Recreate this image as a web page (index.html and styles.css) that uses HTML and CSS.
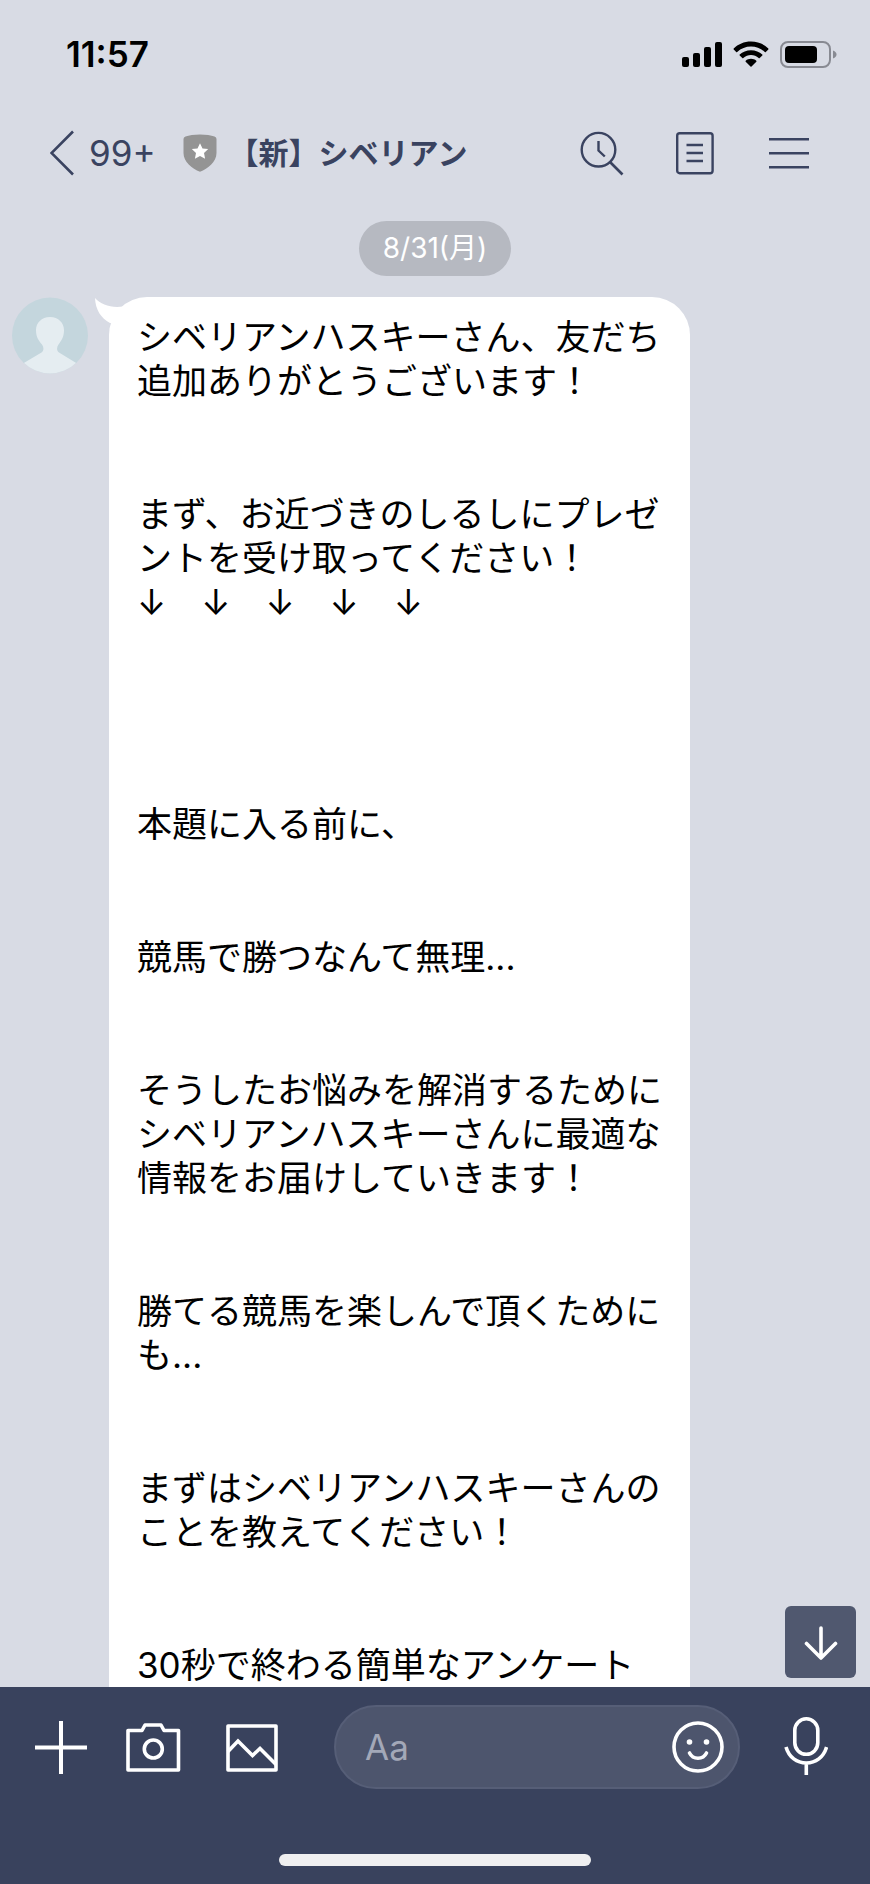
FILE: index.html
```html
<!DOCTYPE html>
<html lang="ja">
<head>
<meta charset="utf-8">
<meta name="viewport" content="width=device-width, initial-scale=1">
<title>【新】シベリアン</title>
<link rel="stylesheet" href="styles.css">
</head>
<body>
<div class="app">
  <div class="status">
    <span class="status-time">11:57</span>
    <div class="status-icons">
      <svg width="40" height="27" viewBox="0 0 40 27"><rect x="0" y="16" width="7" height="10" rx="2"/><rect x="11" y="12" width="7" height="14" rx="2"/><rect x="22" y="6" width="7" height="20" rx="2"/><rect x="33" y="1" width="7" height="25" rx="2"/></svg>
      <svg width="36" height="27" viewBox="0 0 36 27"><path d="M18 0.5C25 .5 31 3.200 35.300 7.500Q35.700 8 35.300 8.500L32.800 11Q32.300 11.400 31.800 11C28 7.500 23.200 5.600 18 5.600S8 7.500 4.200 11Q3.700 11.400 3.200 11L.7 8.500Q.3 8 .7 7.500C5 3.200 11 .5 18 .5Z"/><path d="M18 9.200C22.500 9.200 26.400 10.900 29.300 13.600Q29.800 14.100 29.300 14.600L26.700 17.100Q26.200 17.500 25.700 17.100C23.500 15.200 20.900 14.100 18 14.100S12.500 15.200 10.300 17.100Q9.800 17.500 9.300 17.100L6.700 14.600Q6.200 14.100 6.700 13.600C9.600 10.900 13.500 9.200 18 9.200Z"/><path d="M18 17.800C20 17.800 21.900 18.500 23.300 19.700Q23.800 20.200 23.300 20.700L18.500 25.600Q18 26 17.500 25.600L12.700 20.700Q12.200 20.200 12.700 19.700C14.100 18.500 16 17.800 18 17.800Z"/></svg>
      <svg width="57" height="27" viewBox="0 0 57 27"><rect x="1" y="1" width="49" height="25" rx="7" fill="none" stroke="#888a92" stroke-width="2"/><rect x="5" y="5" width="32" height="17" rx="4"/><path d="M53 9.500Q56.500 11 56.500 13.500T53 17.500Z" fill="#888a92"/></svg>
    </div>
  </div>

  <header class="nav">
    <button class="back" type="button" aria-label="戻る 99+">
      <svg width="24" height="46" viewBox="0 0 24 46"><path d="M23 1.500 1.500 23 23 44.500" fill="none" stroke="currentColor" stroke-width="2.600"/></svg>
      <span>99+</span>
    </button>
    <svg class="shield" width="34" height="38" viewBox="0 0 34 38"><path d="M17 .5C23 .5 28 1.300 31.500 2.400Q33.500 3 33.500 5V19C33.500 28 25 34.500 17 37.800 9 34.500 .5 28 .5 19V5Q.5 3 2.500 2.400C6 1.300 11 .5 17 .5Z" fill="#949494"/><path d="M17 9.200 19.500 14.400 25.200 15.100 21 19 22.100 24.700 17 21.900 11.900 24.700 13 19 8.800 15.100 14.500 14.400Z" fill="#fff"/></svg>
    <h1 class="title">【新】シベリアン</h1>
    <div class="nav-actions">
      <button type="button" aria-label="検索"><svg width="48" height="48" viewBox="0 0 48 48"><g fill="none" stroke="currentColor" stroke-width="2.400"><circle cx="19.500" cy="20.700" r="16.800"/><path d="M31 33 43.500 45.500" stroke-width="2.600"/><path d="M19.500 12V21.500L25.800 27.500"/></g></svg></button>
      <button type="button" aria-label="ノート"><svg width="48" height="48" viewBox="0 0 48 48"><g fill="none" stroke="currentColor" stroke-width="2.400"><rect x="5.200" y="4.200" width="35.400" height="40" rx="2.500"/><path d="M14.500 16H31M14.500 24H31M14.500 32H31"/></g></svg></button>
      <button type="button" aria-label="メニュー"><svg width="48" height="48" viewBox="0 0 48 48"><path d="M4 10.200H44M4 24.200H44M4 38.200H44" fill="none" stroke="currentColor" stroke-width="2.600"/></svg></button>
    </div>
  </header>

  <main class="chat">
    <time class="date">8/31(月)</time>
    <div class="message">
      <svg class="avatar" width="76" height="77" viewBox="0 0 76 76" role="img" aria-label="プロフィール"><defs><clipPath id="disc"><circle cx="38" cy="38" r="38"/></clipPath></defs><circle cx="38" cy="38" r="38" fill="#c4d6dd"/><path clip-path="url(#disc)" d="M38 19.500C46.500 19.500 52 25.500 52 32.500 52 40 49 43.500 46.500 47 44.500 50 44.500 53 47 55L65 66V78H11V66L29.500 55C32 53 32 50 30 47 27 43.500 24 40 24 32.500 24 25.500 29.500 19.500 38 19.500Z" fill="#e5edf1"/></svg>
      <div class="bubble">
        <svg class="tail" width="40" height="30" viewBox="0 0 40 30"><path d="M0 1C6 8 16 11 28 9.500L38 14 24 28 15 26C6 21 .5 13 0 1Z" fill="#fff"/></svg>
        <p>シベリアンハスキーさん、友だち<br>追加ありがとうございます！</p>
        <p>まず、お近づきのしるしにプレゼ<br>ントを受け取ってください！<br>↓　↓　↓　↓　↓</p>
        <p class="after-break">本題に入る前に、</p>
        <p>競馬で勝つなんて無理...</p>
        <p>そうしたお悩みを解消するために<br>シベリアンハスキーさんに最適な<br>情報をお届けしていきます！</p>
        <p>勝てる競馬を楽しんで頂くために<br>も...</p>
        <p>まずはシベリアンハスキーさんの<br>ことを教えてください！</p>
        <p>30秒で終わる簡単なアンケート</p>
      </div>
    </div>
    <button class="jump" type="button" aria-label="最新メッセージへ"><svg width="36" height="36" viewBox="0 0 36 36"><path d="M18 4V34M3.500 19.500 18 34 32.500 19.500" fill="none" stroke="#fff" stroke-width="3.600" stroke-linecap="round" stroke-linejoin="round"/></svg></button>
  </main>

  <footer class="bar">
    <form class="composer">
      <div class="tools">
        <button type="button" aria-label="追加"><svg width="60" height="60" viewBox="0 0 60 60"><path d="M32 4V57M6 30.500H58" fill="none" stroke="currentColor" stroke-width="4"/></svg></button>
        <button type="button" aria-label="カメラ"><svg width="60" height="60" viewBox="0 0 60 60"><g fill="none" stroke="currentColor" stroke-width="3.600" stroke-linejoin="round"><path d="M3 13.500H17L20 8H36L39 13.500H53.500V53H3Z"/><circle cx="28.300" cy="32" r="9"/></g></svg></button>
        <button type="button" aria-label="写真"><svg width="60" height="60" viewBox="0 0 60 60"><g fill="none" stroke="currentColor" stroke-width="3.600" stroke-linejoin="round"><path d="M7 9H55V53H7Z"/><path d="M7 34.500 17 24 31.500 38.500 39 31.500 55 47.500" stroke-linejoin="miter"/></g></svg></button>
      </div>
      <div class="field">
        <input type="text" placeholder="Aa" aria-label="メッセージを入力">
        <button type="button" aria-label="スタンプ"><svg width="52" height="52" viewBox="0 0 52 52"><circle cx="26" cy="26" r="24" fill="none" stroke="currentColor" stroke-width="3.600"/><circle cx="17.500" cy="21" r="2.800" fill="currentColor"/><circle cx="34.500" cy="21" r="2.800" fill="currentColor"/><path d="M17.500 32C21 39 31 39 34.500 32" fill="none" stroke="currentColor" stroke-width="3.600" stroke-linecap="round"/></svg></button>
      </div>
      <button class="mic" type="button" aria-label="音声"><svg width="44" height="60" viewBox="0 0 44 60"><g fill="none" stroke="currentColor" stroke-width="3.600"><rect x="10.800" y="1.800" width="23" height="35.500" rx="11.500"/><path d="M2 30C5 40.500 13 46 22.300 46S39.600 40.500 42.600 30M22.300 46V58"/></g></svg></button>
    </form>
    <div class="home"></div>
  </footer>
</div>
</body>
</html>
```
FILE: styles.css
```css
* { box-sizing: border-box; }

body {
  margin: 0;
  background: #d8dbe4;
  color: #000;
  font-family: Inter, "Noto Sans CJK JP", sans-serif;
}

button {
  display: flex;
  align-items: center;
  justify-content: center;
  padding: 0;
  border: 0;
  background: none;
  color: inherit;
  font: inherit;
}

svg { display: block; flex: none; }

.app {
  display: flex;
  flex-direction: column;
  height: 100vh;
}

.status {
  display: flex;
  align-items: center;
  justify-content: space-between;
  padding: 32px 33px 0 66px;
}

.status-time {
  font-size: 35px;
  font-weight: 600;
  line-height: 44px;
}

.status-icons { display: flex; gap: 11px; }

.nav {
  display: flex;
  align-items: center;
  padding: 46px 57px 0 50px;
  height: 108px;
  margin-bottom: 37px;
  color: #3a4360;
}

.back { gap: 15px; font-size: 35px; }
.shield { margin: 0 12px 0 27px; }

.title {
  margin: 0;
  font-size: 30px;
  font-weight: 700;
  line-height: 44px;
  white-space: nowrap;
}

.nav-actions {
  display: flex;
  gap: 45px;
  margin-left: auto;
}

.chat {
  position: relative;
  flex: 1;
  min-height: 0;
  overflow: hidden;
}

.date {
  display: block;
  width: fit-content;
  margin: 0 auto 21px;
  padding: 0 24px;
  border-radius: 28px;
  background: #b6b9c1;
  color: #fff;
  font-size: 28px;
  line-height: 55px;
}

.message {
  display: flex;
  align-items: flex-start;
  gap: 21px;
  padding-left: 12px;
}

.bubble {
  position: relative;
  padding: 18px 28px 44px;
  border-radius: 38px;
  background: #fff;
  font-size: 35px;
  line-height: 44px;
}

.bubble p { margin: 0 0 89px; }
.bubble .after-break { margin-top: 178px; }

.tail {
  position: absolute;
  top: 0;
  left: -14px;
}

.jump {
  position: absolute;
  right: 14px;
  bottom: 9px;
  width: 71px;
  height: 72px;
  border-radius: 6px;
  background: #50586f;
}

.bar {
  padding: 18px 0;
  background: #39425d;
  color: #fff;
}

.composer {
  display: flex;
  align-items: center;
  padding: 0 42px 0 29px;
}

.tools { display: flex; gap: 36px; }

.field {
  display: flex;
  flex: 1;
  align-items: center;
  min-width: 0;
  height: 84px;
  margin: 0 44px 0 53px;
  padding: 0 14px 0 29px;
  border: 2px solid #565e77;
  border-radius: 42px;
  background: #4d556d;
}

.field input {
  flex: 1;
  min-width: 0;
  padding: 0;
  border: 0;
  outline: 0;
  background: none;
  color: #fff;
  font: inherit;
  font-size: 35px;
}

.field input::placeholder { color: #a3a8b8; opacity: 1; }

.home {
  width: 312px;
  height: 12px;
  margin: 65px auto 0;
  border-radius: 6px;
  background: #efeff0;
}
```
